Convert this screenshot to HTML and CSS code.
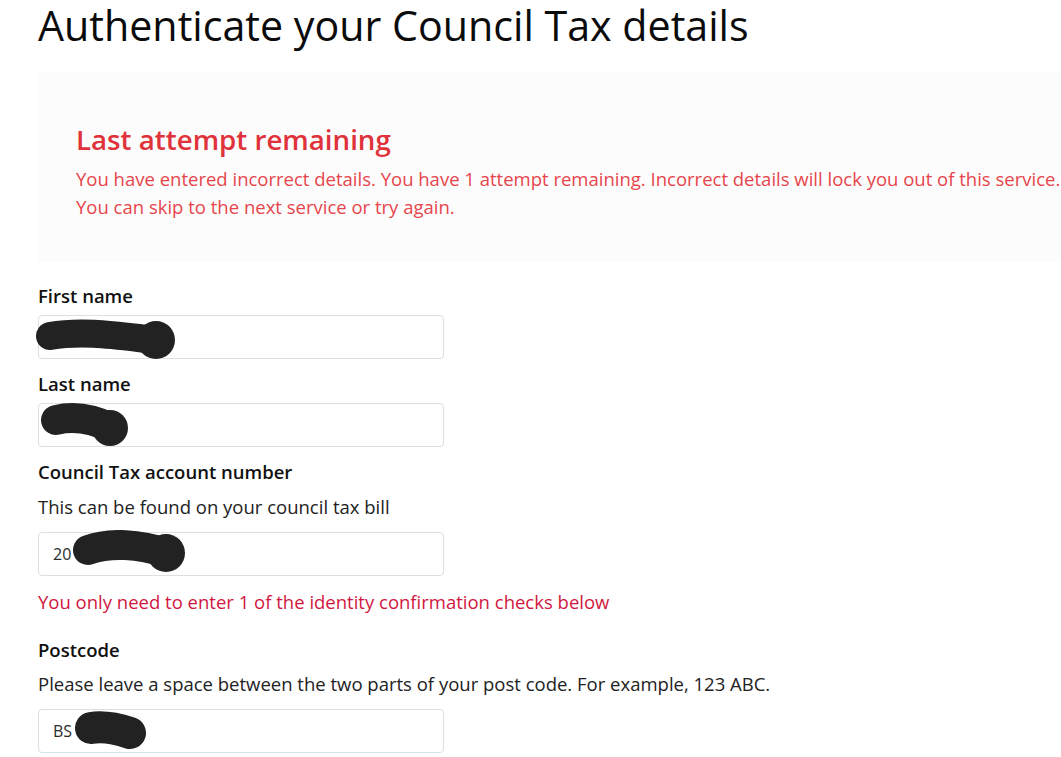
FILE: index.html
```html
<!DOCTYPE html>
<html lang="en">
<head>
<meta charset="utf-8">
<title>Authenticate your Council Tax details</title>
<link rel="stylesheet" href="styles.css">
</head>
<body>
<main class="page">
  <h1 class="title">Authenticate your Council Tax details</h1>
  <section class="alert">
    <h2 class="alert-title">Last attempt remaining</h2>
    <p class="alert-text">You have entered incorrect details. You have 1 attempt remaining. Incorrect details will lock you out of this service.<br>You can skip to the next service or try again.</p>
  </section>
  <form class="form">
    <div class="field">
      <label class="label">First name</label>
      <div class="input">
        <svg class="blob blob-first" width="144" height="42" viewBox="0 0 144 42"><path d="M16 18 C 50 12, 85 18, 122 22" stroke="#222" stroke-width="28" stroke-linecap="round" fill="none"/><circle cx="122" cy="22" r="19" fill="#222"/></svg>
      </div>
    </div>
    <div class="field">
      <label class="label">Last name</label>
      <div class="input">
        <svg class="blob blob-last" width="92" height="44" viewBox="0 0 92 44"><path d="M17 17 C 38 12, 58 18, 72 25" stroke="#222" stroke-width="30" stroke-linecap="round" fill="none"/><circle cx="71" cy="25" r="18" fill="#222"/></svg>
      </div>
    </div>
    <div class="field">
      <label class="label">Council Tax account number</label>
      <p class="hint">This can be found on your council tax bill</p>
      <div class="input"><span class="value">20</span>
        <svg class="blob blob-account" width="116" height="44" viewBox="0 0 116 44"><path d="M16 20 C 38 12, 68 14, 94 23" stroke="#222" stroke-width="30" stroke-linecap="round" fill="none"/><circle cx="94" cy="23" r="19" fill="#222"/></svg>
      </div>
    </div>
    <p class="notice">You only need to enter 1 of the identity confirmation checks below</p>
    <div class="field">
      <label class="label">Postcode</label>
      <p class="hint hint-postcode">Please leave a space between the two parts of your post code. For example, 123 ABC.</p>
      <div class="input"><span class="value">BS</span>
        <svg class="blob blob-postcode" width="74" height="40" viewBox="0 0 74 40"><path d="M17 17 C 30 15, 44 18, 56 22" stroke="#222" stroke-width="32" stroke-linecap="round" fill="none"/></svg>
      </div>
    </div>
  </form>
</main>
</body>
</html>
```

FILE: styles.css
```css
* { box-sizing: border-box; }
html, body { margin: 0; padding: 0; background: #fff; }
body {
  font-family: "Open Sans", "Noto Sans", sans-serif;
  color: #1b1b1b;
}
.page {
  padding-left: 38px;
}
.title {
  margin: 0;
  font-size: 41.2px;
  line-height: 50px;
  font-weight: 400;
  color: #0b0b0b;
  white-space: nowrap;
}
.alert {
  margin-top: 22px;
  background: #fcfcfc;
  padding: 48px 0 0 38px;
  height: 190px;
}
.alert-title {
  margin: 0 0 7px;
  font-size: 27.7px;
  line-height: 38px;
  font-weight: 600;
  color: #e0323b;
}
.alert-text {
  margin: 0;
  font-size: 18.5px;
  line-height: 28px;
  color: #e6454c;
  white-space: nowrap;
}
.form {
  padding-top: 21px;
}
.field {
  margin-bottom: 12px;
}
.label {
  display: block;
  font-size: 18.5px;
  line-height: 26px;
  font-weight: 600;
  color: #111;
  margin-bottom: 6px;
}
.hint {
  margin: 9px 0 12px;
  font-size: 18.5px;
  line-height: 26px;
  color: #222;
  white-space: nowrap;
}
.hint-postcode {
  margin-top: 8px;
}
.input {
  width: 406px;
  height: 44px;
  border: 1px solid #dcdfe3;
  border-radius: 4px;
  background: #fff;
  display: flex;
  align-items: center;
  padding-left: 14px;
  position: relative;
}
.field + .field .label { margin-top: 1px; }
.value {
  font-size: 16px;
  color: #2b2b2b;
}
.blob {
  position: absolute;
}
.blob-first { left: -5px; top: 2px; }
.blob-last { left: 0; top: -1px; }
.blob-account { left: 33px; top: -3px; }
.blob-postcode { left: 35px; top: 1px; }
.notice {
  margin: 13px 0 22px;
  font-size: 18.5px;
  line-height: 26px;
  color: #d0173f;
  white-space: nowrap;
}
```
